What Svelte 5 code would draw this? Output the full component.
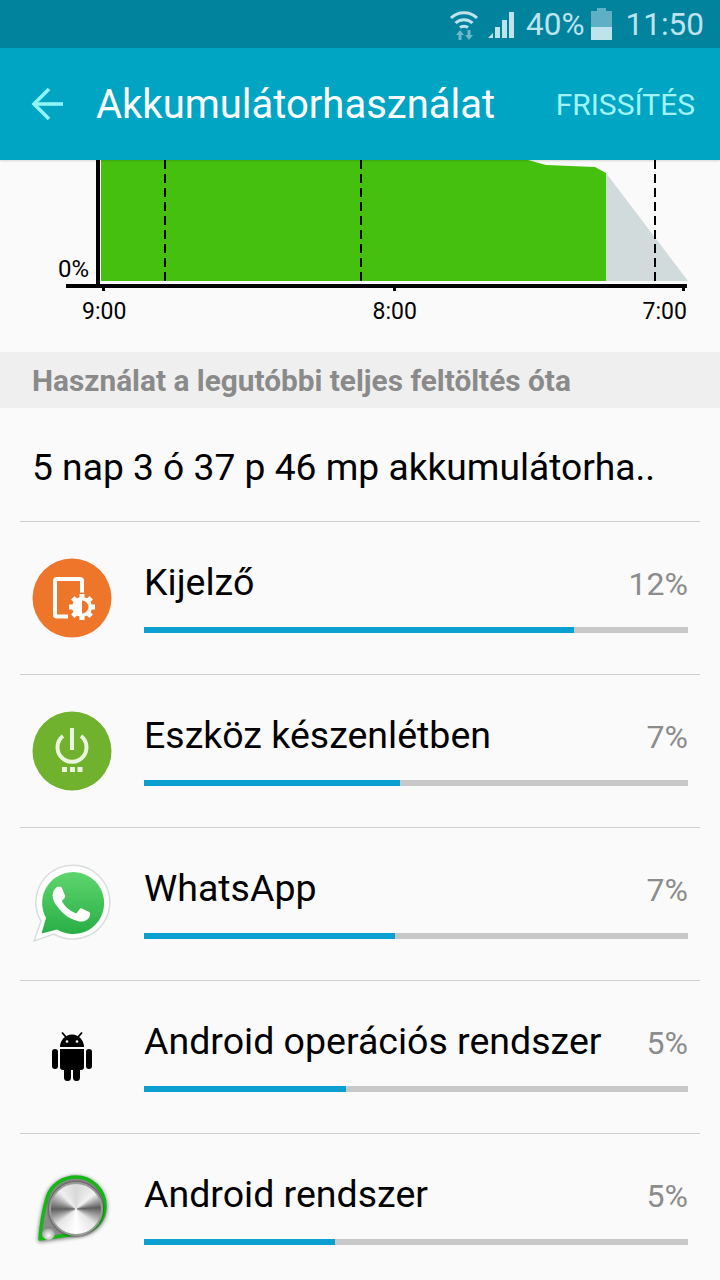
<script>
  const usage = [
    { name: 'Kijelző', pct: '12%', fill: 430, icon: 'display' },
    { name: 'Eszköz készenlétben', pct: '7%', fill: 256, icon: 'power' },
    { name: 'WhatsApp', pct: '7%', fill: 251, icon: 'whatsapp' },
    { name: 'Android operációs rendszer', pct: '5%', fill: 202, icon: 'android' },
    { name: 'Android rendszer', pct: '5%', fill: 191, icon: 'knob' }
  ];

  const gearTeeth = [0, 45, 90, 135];
</script>

<div class="phone">
  <div class="status">
    <svg class="wifi" width="30" height="32" viewBox="0 0 30 32">
      <g fill="none" stroke="#bfe3ec" stroke-width="3">
        <path d="M2 9 C9 2 21 2 28 9" />
        <path d="M6.500 14 C11 9.500 19 9.500 23.500 14" />
        <path d="M11 18.500 C13 16.800 17 16.800 19 18.500" />
      </g>
      <path d="M11 21 l-4 5 h2.500 v5 h3 v-5 h2.500z" fill="#6db8ca" />
      <path d="M20 31 l4 -5 h-2.500 v-5 h-3 v5 h-2.500z" fill="#6db8ca" />
    </svg>
    <svg class="signal" width="28" height="28" viewBox="0 0 28 28" fill="#bfe3ec">
      <path d="M0 28 L5 23 V28z" />
      <rect x="7" y="17" width="5" height="11" />
      <rect x="14" y="10" width="5" height="18" />
      <rect x="21" y="2" width="5" height="26" />
    </svg>
    <span class="pct">40%</span>
    <svg class="battery" width="21" height="32" viewBox="0 0 21 32">
      <path d="M6 0 h9 v3 h6 v29 h-21 v-29 h6z" fill="#5fb0c4" />
      <rect y="19" width="21" height="13" fill="#bfe3ec" />
    </svg>
    <span class="clock">11:50</span>
  </div>

  <header class="appbar">
    <svg class="back" width="34" height="34" viewBox="0 0 34 34" fill="none" stroke="#8ff5f8" stroke-width="3.600">
      <path d="M32 17 H3" />
      <path d="M18 2 L3 17 L18 32" />
    </svg>
    <h1>Akkumulátorhasználat</h1>
    <span class="refresh">FRISSÍTÉS</span>
  </header>

  <div class="chart">
    <svg width="720" height="192" viewBox="0 160 720 192">
      <polygon points="606,173 688,281 606,281" fill="#d2dbdc" />
      <polygon points="101,160 528,160 546,165 595,167 606,173 606,281 101,281" fill="#46c00f" />
      <g stroke="#000" stroke-width="2" stroke-dasharray="9 5">
        <line x1="165" y1="160" x2="165" y2="282" />
        <line x1="361" y1="160" x2="361" y2="282" />
        <line x1="655" y1="160" x2="655" y2="282" />
      </g>
      <rect x="96" y="160" width="4" height="127" fill="#000" />
      <rect x="66" y="284" width="621" height="4" fill="#000" />
      <rect x="102" y="286" width="3" height="5" fill="#000" />
      <rect x="393" y="286" width="3" height="5" fill="#000" />
      <rect x="682" y="286" width="3" height="5" fill="#000" />
      <g class="axis">
        <text class="zero" x="58" y="277">0%</text>
        <text x="82" y="319">9:00</text>
        <text x="372.500" y="319">8:00</text>
        <text x="642.500" y="319">7:00</text>
      </g>
    </svg>
  </div>

  <div class="section">Használat a legutóbbi teljes feltöltés óta</div>

  <div class="summary">5 nap 3 ó 37 p 46 mp akkumulátorha..</div>

  {#each usage as row}
    <div class="row">
      <div class="icon">
        {#if row.icon === 'display'}
          <svg width="80" height="80" viewBox="0 0 80 80">
            <circle cx="40" cy="40" r="39.500" fill="#ee762b" />
            <path d="M36 58.500 H25 a2 2 0 0 1 -2 -2 V23 a2 2 0 0 1 2 -2 H48 a2 2 0 0 1 2 2 V36" fill="none" stroke="#fff" stroke-width="4" />
            <circle cx="50" cy="49" r="14.500" fill="#ee762b" />
            <g fill="#fff">
              {#each gearTeeth as deg}
                <rect x="47.500" y="36" width="5" height="26" transform="rotate({deg} 50 49)" />
              {/each}
              <circle cx="50" cy="49" r="10" />
            </g>
            <path d="M50 42.500 a6.500 6.500 0 0 1 0 13z" fill="#ee762b" />
          </svg>
        {:else if row.icon === 'power'}
          <svg width="80" height="80" viewBox="0 0 80 80">
            <circle cx="40" cy="40" r="39.500" fill="#70b22d" />
            <path d="M31 25 A14.500 14.500 0 1 0 49 25" fill="none" stroke="#e9f5dc" stroke-width="4" />
            <rect x="38" y="17" width="4" height="22" fill="#e9f5dc" />
            <g fill="#e9f5dc">
              <rect x="30" y="56" width="5" height="5" />
              <rect x="38" y="56" width="5" height="5" />
              <rect x="45.500" y="56" width="5" height="5" />
            </g>
          </svg>
        {:else if row.icon === 'whatsapp'}
          <svg width="80" height="80" viewBox="0 0 80 80">
            <defs>
              <linearGradient id="wa" x1="0" y1="0" x2="0" y2="1">
                <stop offset="0" stop-color="#5fd56f" />
                <stop offset="1" stop-color="#28ae45" />
              </linearGradient>
            </defs>
            <g transform="translate(-1 1)">
              <path d="M3 76 L10 56 A37 37 0 1 1 23 69 Z" fill="#fff" stroke="#d9dedb" stroke-width="1.500" />
              <path d="M10.500 68.500 L15 53 A31 31 0 1 1 26 64.500 Z" fill="url(#wa)" />
              <g transform="translate(3 2) scale(3.100)">
                <path fill="#fff" d="M17.472 14.382c-.297-.149-1.758-.867-2.03-.967-.273-.099-.471-.148-.67.15-.197.297-.767.966-.94 1.164-.173.199-.347.223-.644.075-.297-.15-1.255-.463-2.39-1.475-.883-.788-1.48-1.761-1.653-2.059-.173-.297-.018-.458.13-.606.134-.133.298-.347.446-.52.149-.174.198-.298.298-.497.099-.198.05-.371-.025-.52-.075-.149-.669-1.612-.916-2.207-.242-.579-.487-.5-.669-.51-.173-.008-.371-.01-.57-.01-.198 0-.52.074-.792.372-.272.297-1.04 1.016-1.04 2.479 0 1.462 1.065 2.875 1.213 3.074.149.198 2.096 3.2 5.077 4.487.709.306 1.262.489 1.694.625.712.227 1.36.195 1.871.118.571-.085 1.758-.719 2.006-1.413.248-.694.248-1.289.173-1.413-.074-.124-.272-.198-.57-.347" />
              </g>
            </g>
          </svg>
        {:else if row.icon === 'android'}
          <svg width="80" height="80" viewBox="0 0 80 80">
            <path d="M28 30 a12 12.500 0 0 1 24 0z" />
            <path d="M30 15.500 L34 20 M50 15.500 L46 20" stroke="#000" stroke-width="1.800" />
            <circle cx="35" cy="24.500" r="1.300" fill="#fff" />
            <circle cx="45" cy="24.500" r="1.300" fill="#fff" />
            <path d="M28 32 H52 V50 a3 3 0 0 1 -3 3 H31 a3 3 0 0 1 -3 -3z" />
            <rect x="32" y="48" width="7" height="16" rx="3.500" />
            <rect x="41" y="48" width="7" height="16" rx="3.500" />
            <rect x="20" y="32" width="6" height="20" rx="3" />
            <rect x="54" y="32" width="6" height="20" rx="3" />
          </svg>
        {:else}
          <svg class="teardrop" width="80" height="80" viewBox="0 0 80 80">
            <path d="M8 69 C9 55 11 42 15 28 C19 14 32 7 44 7 C60 7 73 20 73 36 C73 50 64 60 50 63 Z" fill="#8c8c8c" stroke="#14b814" stroke-width="3.500" stroke-linejoin="round" />
          </svg>
          <div class="knob"></div>
          <div class="pin"></div>
        {/if}
      </div>
      <div class="body">
        <div class="head">
          <span class="name">{row.name}</span>
          <span class="value">{row.pct}</span>
        </div>
        <div class="track"><div class="fill" style="width: {row.fill}px"></div></div>
      </div>
    </div>
  {/each}
</div>

<style>
  :global(body) {
    margin: 0;
    background: #fafafa;
  }

  .phone {
    width: 720px;
    height: 1280px;
    overflow: hidden;
    background: #fafafa;
    font-family: Roboto, "Liberation Sans", sans-serif;
    color: #000;
  }

  .status {
    height: 48px;
    background: #01839e;
    display: flex;
    align-items: center;
    justify-content: flex-end;
    padding-right: 16px;
    color: #bfe3ec;
    font-size: 31.500px;
    box-sizing: border-box;
  }

  .wifi {
    margin-right: 9px;
    margin-top: 2px;
  }

  .signal {
    margin-right: 10px;
  }

  .pct {
    margin-right: 6px;
  }

  .battery {
    margin-right: 14px;
  }

  .appbar {
    height: 112px;
    background: #00a5c4;
    display: flex;
    align-items: center;
    padding: 0 25px 0 31px;
    box-shadow: 0 1px 2px rgba(0, 0, 0, 0.15);
    position: relative;
  }

  .back {
    margin-right: 31px;
  }

  h1 {
    margin: 0;
    flex: 1;
    font-size: 40px;
    font-weight: 400;
    color: #fff;
    white-space: nowrap;
  }

  .refresh {
    font-size: 30px;
    color: #a0f4f7;
  }

  .chart {
    height: 192px;
  }

  .chart svg {
    display: block;
  }

  .axis {
    font-size: 23px;
    fill: #000;
  }

  .zero {
    font-size: 24px;
  }

  .section {
    height: 56px;
    line-height: 58px;
    background: #efefef;
    padding-left: 32px;
    font-size: 29.800px;
    font-weight: 700;
    color: #8a8a8a;
    white-space: nowrap;
  }

  .summary {
    height: 113px;
    line-height: 118px;
    margin: 0 20px;
    padding-left: 12px;
    font-size: 37.200px;
    border-bottom: 1px solid #cfcfcf;
    white-space: nowrap;
  }

  .row {
    height: 152px;
    margin: 0 20px;
    padding: 0 12px;
    display: flex;
    align-items: flex-start;
    border-bottom: 1px solid #cfcfcf;
  }

  .row:last-child {
    border-bottom: 0;
  }

  .icon {
    width: 80px;
    height: 80px;
    margin-top: 36px;
    margin-right: 32px;
    position: relative;
    flex: none;
  }

  .icon svg {
    display: block;
  }

  .teardrop {
    filter: drop-shadow(0 1px 2px rgba(0, 0, 0, 0.6));
  }

  .knob {
    position: absolute;
    left: 17px;
    top: 12px;
    width: 50px;
    height: 50px;
    border-radius: 50%;
    border: 2px solid #9a9a9a;
    box-shadow: 0 0 3px #222;
    background: conic-gradient(#d8d8d8, #f2f2f2 14%, #5e5e5e 24%, #e6e6e6 36%, #fff 50%, #e6e6e6 64%, #5e5e5e 75%, #efefef 88%, #d8d8d8);
  }

  .pin {
    position: absolute;
    left: 10px;
    top: 57px;
    width: 13px;
    height: 13px;
    border-radius: 50%;
    background: radial-gradient(circle at 50% 65%, #fff, #b0b0b0 55%, #444);
  }

  .body {
    flex: 1;
    min-width: 0;
  }

  .head {
    height: 105px;
    display: flex;
    justify-content: space-between;
    align-items: flex-start;
    padding-top: 39px;
    box-sizing: border-box;
  }

  .name {
    font-size: 37.500px;
    line-height: 42px;
  }

  .value {
    font-size: 32px;
    line-height: 46px;
    color: #8c8c8c;
  }

  .track {
    height: 6px;
    background: #c8c8c8;
  }

  .fill {
    height: 100%;
    background: #0a9fcf;
  }
</style>
